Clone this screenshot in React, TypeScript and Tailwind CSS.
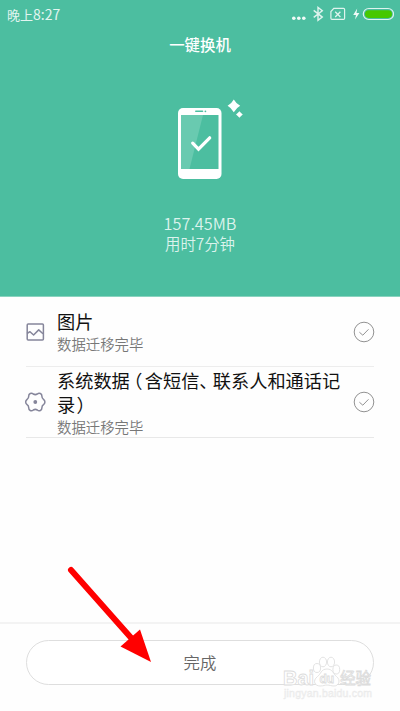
import React from 'react';

const PhoneDone = () => (
  <svg className="mx-auto h-[84px] w-[86px]" viewBox="0 0 86 84" fill="none">
    {/* Phone body */}
    <rect x="21" y="10" width="43.5" height="71" rx="5" fill="#fff" />
    <rect x="38" y="12.4" width="8.3" height="1.7" rx="0.8" fill="#4cbea0" />
    <circle cx="48.4" cy="13.3" r="0.9" fill="#4cbea0" />
    <rect x="24" y="17" width="37.5" height="54" fill="#4cbea0" />
    <path d="M24 17H46L32.5 71H24Z" fill="#69cab0" />
    <path d="M35.7 45.2L41.5 51.2L52.7 39.8" stroke="#fff" strokeWidth="3.2" strokeLinecap="round" />
    {/* Sparkles */}
    <path d="M76.8 1.4Q79.2 5.6 83.2 7.8Q79.2 10 76.8 14.2Q74.4 10 70.6 7.8Q74.4 5.6 76.8 1.4Z" fill="#fff" />
    <path d="M82.4 13.3Q84 15.2 85.8 16.4Q84 17.6 82.4 19.7Q80.8 17.6 79 16.4Q80.8 15.2 82.4 13.3Z" fill="#fff" />
  </svg>
);

const PictureIcon = () => (
  <svg className="-ml-px h-5 w-5" viewBox="0 0 20 20" fill="none" stroke="#85859a" strokeWidth="1.5">
    <rect x="2.2" y="1.9" width="16.2" height="16.2" rx="1" />
    <path d="M2 11.5L5 9.7L8.6 13L13.7 7.9L18 11.8" strokeLinejoin="round" />
  </svg>
);

const SystemIcon = () => (
  <svg className="-ml-px h-5 w-5 overflow-visible" viewBox="0 0 20 20" fill="none" stroke="#85859a" strokeWidth="1.5">
    <path
      d="M8.3 2C9.6 2.8 11 2.8 12.3 2C14.2 0.4 17 1.6 16.9 4.2C16.9 5.6 17.4 6.5 18.5 7.3C20.4 8.8 20.4 11.2 18.5 12.7C17.4 13.5 16.9 14.4 16.9 15.8C17 18.4 14.2 19.6 12.3 18C11 17.2 9.6 17.2 8.3 18C6.4 19.6 3.6 18.4 3.7 15.8C3.7 14.4 3.2 13.5 2.1 12.7C0.2 11.2 0.2 8.8 2.1 7.3C3.2 6.5 3.7 5.6 3.7 4.2C3.6 1.6 6.4 0.4 8.3 2Z"
      strokeLinejoin="round"
    />
    <circle cx="10.3" cy="10" r="1.9" fill="#85859a" stroke="none" />
  </svg>
);

const DoneCheck = () => (
  <svg className="-mr-px h-[22px] w-[22px] shrink-0" viewBox="0 0 22 22" fill="none" stroke="#929292">
    <circle cx="11" cy="11" r="9.8" />
    <path d="M6.4 11.2L9.8 14.2L15.5 8.3" />
  </svg>
);

const StatusIcons = () => (
  <svg className="h-4 w-[104px]" viewBox="0 0 104 16" fill="none" stroke="#dff4ee">
    <g fill="#f0faf7" stroke="none">
      <circle cx="3.8" cy="12.3" r="1.8" />
      <circle cx="8.8" cy="12.3" r="1.8" />
      <circle cx="13.8" cy="12.3" r="1.8" />
    </g>
    {/* Bluetooth */}
    <path d="M23.7 4.4L32.3 11.1L28 14.4V1.4L32.3 4.7L23.7 11.4" strokeWidth="1.4" />
    {/* No SIM */}
    <path d="M43.8 2.4H53.5Q54.6 2.4 54.6 3.5V12.3Q54.6 13.4 53.5 13.4H42Q40.9 13.4 40.9 12.3V5.6Z" strokeWidth="1.2" />
    <path d="M45.2 5.8L50.4 11M50.4 5.8L45.2 11" strokeWidth="1.3" />
    {/* Battery */}
    <path d="M67.2 2.5L63.2 9H66L65 13.5L69.4 6.9H66.5Z" fill="#f0faf7" stroke="none" />
    <rect x="73.3" y="2.5" width="30.2" height="11" rx="5.5" strokeWidth="1.2" />
    <rect x="75" y="4.2" width="27" height="7.7" rx="3.8" fill="#46c800" stroke="none" />
  </svg>
);

const Watermark = () => (
  <svg
    className="absolute left-[280px] top-[652px] h-[52px] w-[100px]"
    viewBox="0 0 100 52"
    fill="#fff"
    stroke="#dcdcdc"
    strokeWidth="0.8"
    fontFamily="'Liberation Sans', 'Noto Sans CJK SC', sans-serif"
  >
    <text x="3" y="33" fontSize="20" fontWeight="bold" textLength="31" lengthAdjust="spacingAndGlyphs">Bai</text>
    <ellipse cx="37" cy="16" rx="3.6" ry="4.5" />
    <ellipse cx="43" cy="10" rx="3.6" ry="4.8" />
    <ellipse cx="51" cy="10" rx="3.6" ry="4.8" />
    <ellipse cx="56.3" cy="17.5" rx="3.4" ry="4.5" />
    <path d="M47 17C41 17 41 22 37.5 24.5C32 29 35 34 40 34C44 34 44 33 47 33C50 33 51 34 54 34C59 34 61 28 56.5 24.5C53 22 53 17 47 17Z" />
    <text x="39.5" y="31" fontSize="12" fontWeight="bold">du</text>
    <text x="60" y="32" fontSize="15.5" textLength="31" lengthAdjust="spacingAndGlyphs">经验</text>
    <text x="4" y="45" fontSize="10.5" fill="#f4f4f4" stroke="#e9e9e9" strokeWidth="0.4" textLength="88">jingyan.baidu.com</text>
  </svg>
);

const App = () => {
  return (
    <div className="relative flex h-[711px] w-[400px] flex-col overflow-hidden bg-[#fefefe] font-['Noto_Sans_CJK_SC','Noto_Sans',sans-serif]">
      {/* Header */}
      <header className="h-[297px] shrink-0 border-b border-[#8ad3bf] bg-[#4cbea0] text-white">
        <div className="flex h-7 items-center justify-between pl-[7px] pr-[6px]">
          <span className="text-[13px] text-[#e2f5f0]">
            晚上<span className="text-[14px]">8:27</span>
          </span>
          <StatusIcons />
        </div>
        <h1 className="h-[34px] text-center text-[15.4px] font-medium leading-[32px]">一键换机</h1>
        <div className="pt-9">
          <PhoneDone />
        </div>
        <div className="pt-[31px] text-center leading-[20px] text-[#dcf3ed]">
          <p className="text-[16.3px] font-[350]">157.45MB</p>
          <p className="text-[15.4px] font-[350]">用时7分钟</p>
        </div>
      </header>

      {/* Migrated items */}
      <main className="flex-1 px-[26px]">
        <div className="flex h-[70px] items-center border-b border-[#ededed]">
          <PictureIcon />
          <div className="ml-3 flex-1">
            <h2 className="text-[18.2px] leading-6 text-[#111]">图片</h2>
            <p className="pt-px text-[14.4px] font-[350] leading-5 text-[#777]">数据迁移完毕</p>
          </div>
          <DoneCheck />
        </div>
        <div className="flex h-[71px] items-center border-b border-[#e8e8e8]">
          <SystemIcon />
          <div className="ml-3 flex-1 whitespace-nowrap">
            <h2 className="text-[18.2px] leading-6 text-[#111]">
              系统数据
              <span className="inline-block w-[15px] pr-[3px] text-right [font-feature-settings:'palt']">（</span>
              含短信
              <span className="inline-block w-[13.5px] [font-feature-settings:'palt']">、</span>
              联系人和通话记
              <br />
              录<span className="ml-0.5 [font-feature-settings:'palt']">）</span>
            </h2>
            <p className="pt-px text-[14.4px] font-[350] leading-5 text-[#777]">数据迁移完毕</p>
          </div>
          <DoneCheck />
        </div>
      </main>

      {/* Bottom action */}
      <footer className="h-[89px] shrink-0 border-t-2 border-[#f3f3f3] px-[26px] pt-4">
        <button className="h-[45px] w-full rounded-full border border-[#dedede] bg-white pb-px text-[16.4px] font-[350] text-[#666]">
          完成
        </button>
      </footer>

      <Watermark />

      {/* Pointer arrow */}
      <svg className="absolute left-[60px] top-[560px] h-[110px] w-[100px]" viewBox="0 0 100 110">
        <path d="M11 10L73 80" stroke="#f00" strokeWidth="6" strokeLinecap="round" />
        <path d="M91 102L60.5 86.5L80 69.5Z" fill="#f00" />
      </svg>
    </div>
  );
};

export default App;
